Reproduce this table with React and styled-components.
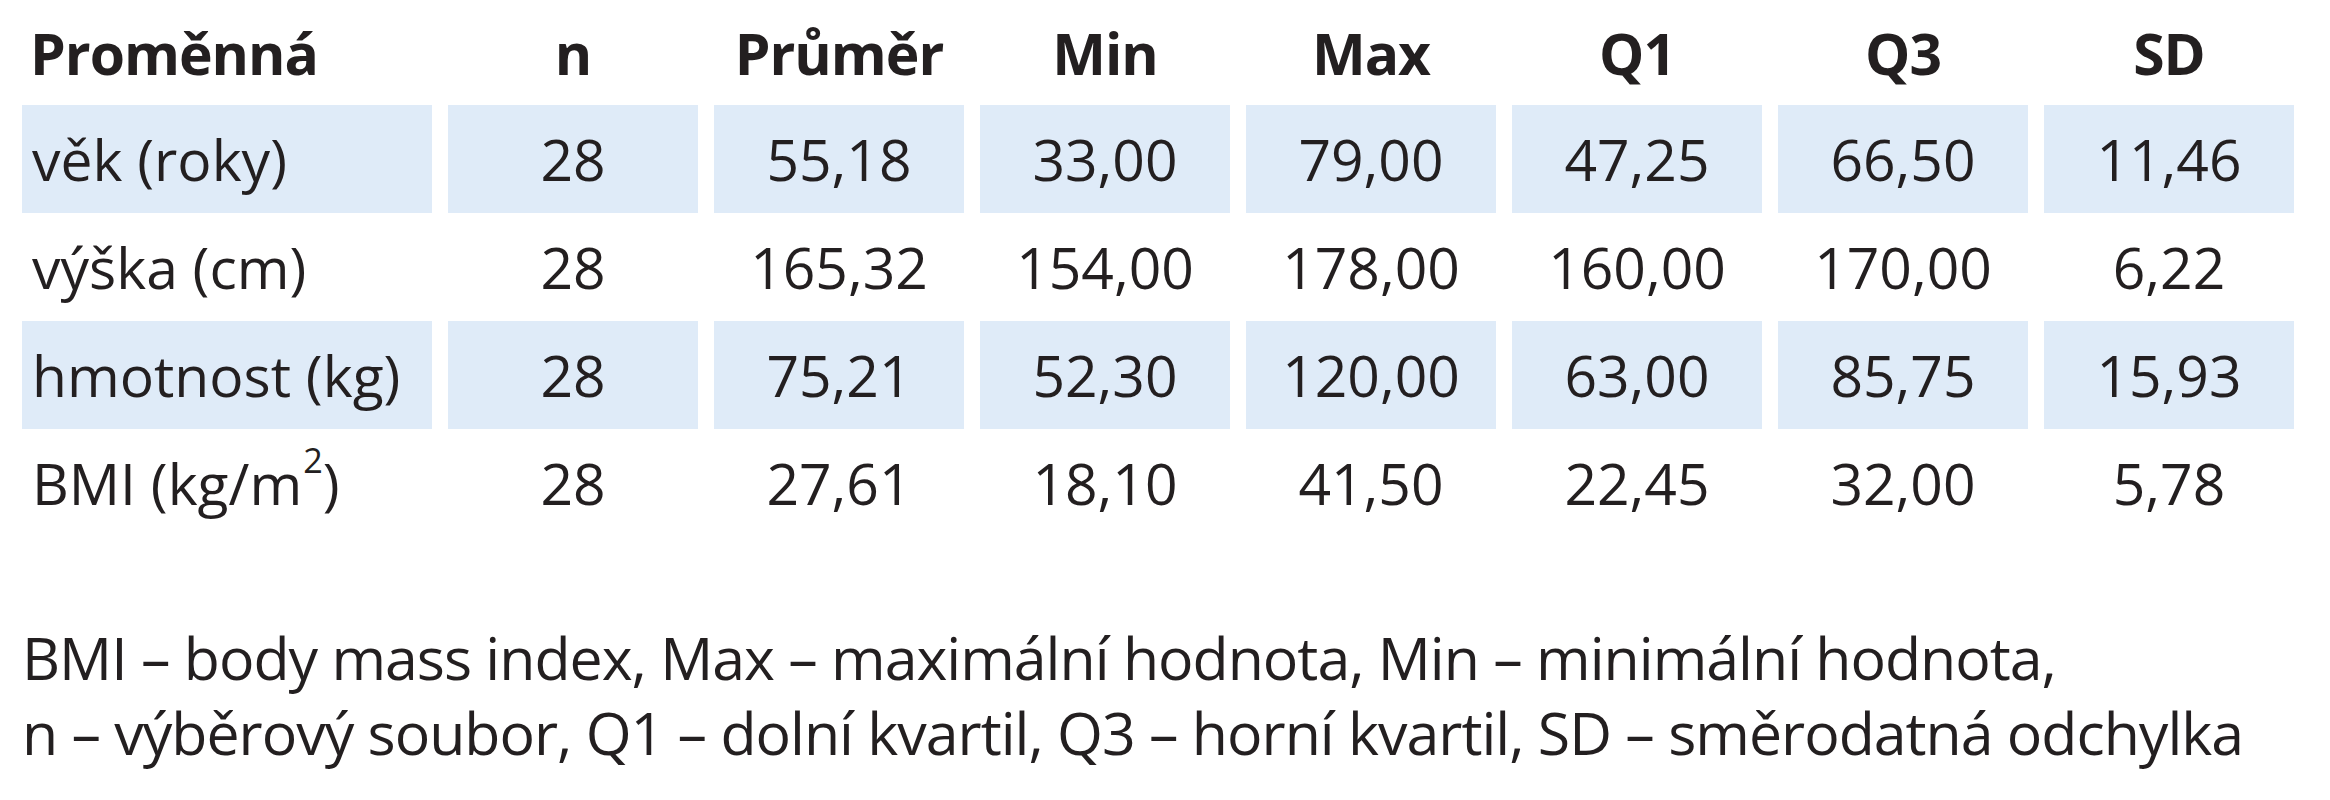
import React from 'react';
import styled, { createGlobalStyle } from 'styled-components';

const GlobalStyle = createGlobalStyle`
  body {
    margin: 0;
    background: #fff;
    color: #231f20;
    font-family: "Open Sans", "Noto Sans", Arial, sans-serif;
  }
`;

const Page = styled.div`
  padding-left: 22px;
  width: 2308px;
`;

const Table = styled.div`
  display: grid;
  grid-template-columns: 410px repeat(7, 250px);
  grid-template-rows: 105px repeat(4, 108px);
  column-gap: 16px;
`;

const HeadCell = styled.div`
  display: flex;
  align-items: center;
  justify-content: ${(p) => (p.$first ? 'flex-start' : 'center')};
  padding-left: ${(p) => (p.$first ? '8px' : '0')};
  font-size: 57px;
  font-weight: 700;
  letter-spacing: -1px;
  white-space: nowrap;
`;

const Cell = styled.div`
  display: flex;
  align-items: center;
  justify-content: ${(p) => (p.$first ? 'flex-start' : 'center')};
  padding-left: ${(p) => (p.$first ? '10px' : '0')};
  background: ${(p) => (p.$shaded ? '#dfebf8' : 'transparent')};
  font-size: 57px;
  font-weight: 400;
  white-space: nowrap;
`;

const Label = styled.span`
  display: inline-block;
`;

const Sup = styled.sup`
  font-size: 0.6em;
  line-height: 0;
  vertical-align: 0.95em;
  margin-left: 1px;
`;

const Note = styled.div`
  margin-top: 83px;
  font-size: 59px;
  line-height: 75px;
  letter-spacing: -1px;
  white-space: nowrap;
`;

const headers = ['Proměnná', 'n', 'Průměr', 'Min', 'Max', 'Q1', 'Q3', 'SD'];

const rows = [
  { label: 'věk (roky)', values: ['28', '55,18', '33,00', '79,00', '47,25', '66,50', '11,46'] },
  { label: 'výška (cm)', values: ['28', '165,32', '154,00', '178,00', '160,00', '170,00', '6,22'] },
  { label: 'hmotnost (kg)', values: ['28', '75,21', '52,30', '120,00', '63,00', '85,75', '15,93'] },
  {
    label: (
      <>
        BMI (kg/m<Sup>2</Sup>)
      </>
    ),
    values: ['28', '27,61', '18,10', '41,50', '22,45', '32,00', '5,78'],
  },
];

export default function App() {
  return (
    <>
      <GlobalStyle />
      <Page>
        <Table>
          {headers.map((h, i) => (
            <HeadCell key={h} $first={i === 0}>
              {h}
            </HeadCell>
          ))}
          {rows.map((row, r) => (
            <React.Fragment key={r}>
              <Cell $first $shaded={r % 2 === 0}>
                <Label>{row.label}</Label>
              </Cell>
              {row.values.map((v, i) => (
                <Cell key={i} $shaded={r % 2 === 0}>
                  {v}
                </Cell>
              ))}
            </React.Fragment>
          ))}
        </Table>
        <Note>
          <div>BMI – body mass index, Max – maximální hodnota, Min – minimální hodnota,</div>
          <div>n – výběrový soubor, Q1 – dolní kvartil, Q3 – horní kvartil, SD – směrodatná odchylka</div>
        </Note>
      </Page>
    </>
  );
}
